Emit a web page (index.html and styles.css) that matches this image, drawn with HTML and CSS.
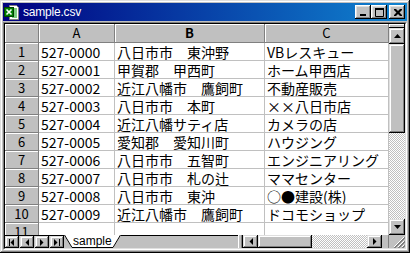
FILE: index.html
```html
<!DOCTYPE html>
<html>
<head>
    <title>sample.csv</title>
    <link rel="stylesheet" href="styles.css">
</head>
<body>
    <div class="window">
        <div class="titlebar">
            <svg class="app-icon" viewBox="0 0 16 16">
                <path d="M5.5 1.5h7l2 2v12h-9z" fill="#fff" stroke="#808080"/>
                <path d="M8 5h5M8 7h5M8 9h5M8 11h5M8 13h5" stroke="#00a000"/>
                <rect x="0.5" y="3.5" width="9" height="9" fill="#008000" stroke="#004000"/>
                <path d="M2.5 5.5l5 5M7.5 5.5l-5 5" stroke="#fff" stroke-width="1.6"/>
            </svg>
            <span class="title">sample.csv</span>
            <div class="title-buttons">
                <button class="tbtn"><svg width="8" height="7" viewBox="0 0 8 7"><rect x="0" y="5" width="6" height="2" fill="#000"/></svg></button>
                <button class="tbtn"><svg width="9" height="9" viewBox="0 0 9 9"><path d="M0.5 1.5h8v7h-8z" fill="none" stroke="#000"/><rect x="0" y="0" width="9" height="2" fill="#000"/></svg></button>
                <button class="tbtn close"><svg width="8" height="7" viewBox="0 0 8 7"><path d="M0 0h2l2 2 2-2h2v1l-2.5 2.5 2.5 2.5v1h-2l-2-2-2 2h-2v-1l2.5-2.5-2.5-2.5z" fill="#000"/></svg></button>
            </div>
        </div>

        <div class="sheet">
            <div class="sheet-inner">
                <div class="main">
                    <div class="grid" id="grid">
                        <div class="corner"></div>
                        <div class="colhead">A</div>
                        <div class="colhead active">B</div>
                        <div class="colhead">C</div>
                    </div>
                    <div class="vscroll">
                        <div class="split-v"></div>
                        <div class="sbtn"><svg width="7" height="4" viewBox="0 0 7 4"><path d="M3.5 0L7 4H0z" fill="#000"/></svg></div>
                        <div class="vthumb"></div>
                        <div class="track"></div>
                        <div class="sbtn"><svg width="7" height="4" viewBox="0 0 7 4"><path d="M0 0h7L3.5 4z" fill="#000"/></svg></div>
                    </div>
                </div>
                <div class="bottombar">
                    <div class="tabnav">
                        <div class="nbtn"><svg width="6" height="7" viewBox="0 0 6 7"><rect x="0" y="0" width="1" height="7"/><path d="M5 0v7L1.5 3.5z"/></svg></div>
                        <div class="nbtn"><svg width="4" height="7" viewBox="0 0 4 7"><path d="M4 0v7L0.5 3.5z"/></svg></div>
                        <div class="nbtn"><svg width="4" height="7" viewBox="0 0 4 7"><path d="M0 0v7l3.5-3.5z"/></svg></div>
                        <div class="nbtn"><svg width="6" height="7" viewBox="0 0 6 7"><path d="M0 0v7l3.5-3.5z"/><rect x="5" y="0" width="1" height="7"/></svg></div>
                    </div>
                    <div class="tab">
                        <svg class="slant" viewBox="0 0 8 13"><path d="M0 0L8 13V0z" fill="#fff"/><path d="M0.5 0L8 12.5" stroke="#000"/></svg>
                        <span class="tab-label">sample</span>
                        <svg class="slant" viewBox="0 0 8 13"><path d="M8 0L0 13V0z" fill="#fff"/><path d="M7.5 0L0 12.5" stroke="#000"/></svg>
                    </div>
                    <div class="tabfill"></div>
                    <div class="split-h"></div>
                    <div class="hbtn"><svg width="4" height="7" viewBox="0 0 4 7"><path d="M4 0v7L0.5 3.5z"/></svg></div>
                    <div class="hthumb"></div>
                    <div class="track htrack"></div>
                    <div class="hbtn"><svg width="4" height="7" viewBox="0 0 4 7"><path d="M0 0v7l3.5-3.5z"/></svg></div>
                    <div class="hgap"></div>
                    <div class="grip">
                        <svg width="12" height="12" viewBox="0 0 12 12">
                            <path d="M11 1L1 11M11 5L5 11M11 9L9 11" stroke="#fff"/>
                            <path d="M12 1L1 12M12 2L2 12M12 5L5 12M12 6L6 12M12 9L9 12M12 10L10 12" stroke="#808080"/>
                        </svg>
                    </div>
                </div>
            </div>
        </div>
    </div>

    <script>
        const rows = [
            ['527-0000', '八日市市　東沖野', 'VBレスキュー'],
            ['527-0001', '甲賀郡　甲西町', 'ホーム甲西店'],
            ['527-0002', '近江八幡市　鷹飼町', '不動産販売'],
            ['527-0003', '八日市市　本町', '××八日市店'],
            ['527-0004', '近江八幡サティ店', 'カメラの店'],
            ['527-0005', '愛知郡　愛知川町', 'ハウジング'],
            ['527-0006', '八日市市　五智町', 'エンジニアリング'],
            ['527-0007', '八日市市　札の辻', 'ママセンター'],
            ['527-0008', '八日市市　東沖', '○●建設(株)'],
            ['527-0009', '近江八幡市　鷹飼町', 'ドコモショップ'],
            ['', '', '']
        ];

        const grid = document.getElementById('grid');

        // Row header + three cells per line
        rows.forEach((row, i) => {
            const head = document.createElement('div');
            head.className = 'rowhead';
            head.textContent = i + 1;
            grid.appendChild(head);

            row.forEach(value => {
                const cell = document.createElement('div');
                cell.className = 'cell';
                cell.textContent = value;
                grid.appendChild(cell);
            });
        });
    </script>
</body>
</html>
```

FILE: styles.css
```css
* {
    box-sizing: border-box;
}

body {
    margin: 0;
    padding: 0;
    font-family: "Noto Sans CJK JP", sans-serif;
}

.window {
    width: 410px;
    height: 253px;
    padding: 3px;
    background: #c0c0c0;
    display: flex;
    flex-direction: column;
    box-shadow: inset -1px -1px #000, inset 1px 1px #dfdfdf,
                inset -2px -2px #808080, inset 2px 2px #fff;
}

/* title bar */
.titlebar {
    height: 18px;
    display: flex;
    align-items: center;
    padding: 0 2px 0 1px;
    background: linear-gradient(to right, #000080, #1084d0);
}

.app-icon {
    width: 16px;
    height: 16px;
}

.title {
    flex: 1;
    margin-left: 3px;
    color: #fff;
    font: 12px "Liberation Sans", sans-serif;
    letter-spacing: -0.2px;
}

.title-buttons {
    display: flex;
}

.tbtn {
    width: 16px;
    height: 14px;
    padding: 0 0 0 1px;
    border: none;
    background: #c0c0c0;
    display: flex;
    align-items: center;
    justify-content: center;
    box-shadow: inset -1px -1px #000, inset 1px 1px #fff,
                inset -2px -2px #808080, inset 2px 2px #dfdfdf;
}

.tbtn.close {
    margin-left: 2px;
}

/* sheet frame */
.sheet {
    margin-top: 1px;
    flex: 1;
    border: 1px solid;
    border-color: #808080 #fff #fff #808080;
    display: flex;
}

.sheet-inner {
    flex: 1;
    border: 1px solid;
    border-color: #000 #dfdfdf #dfdfdf #000;
    display: flex;
    flex-direction: column;
}

.main {
    display: flex;
    height: 211px;
}

.grid {
    display: grid;
    grid-template-columns: 34px 76px 150px 124px;
    grid-template-rows: 19px repeat(11, 18px);
    height: 211px;
    overflow: hidden;
    background: #fff;
}

.corner,
.colhead,
.rowhead {
    background: #c0c0c0;
    border-right: 1px solid #808080;
    border-bottom: 1px solid #808080;
    box-shadow: inset 1px 1px #fff;
    text-align: center;
    font-size: 13px;
    color: #000;
}

.colhead {
    line-height: 18px;
}

.colhead.active {
    font-weight: bold;
}

.rowhead {
    padding-top: 1px;
    line-height: 16px;
    overflow: hidden;
}

.cell {
    border-right: 1px solid #c0c0c0;
    border-bottom: 1px solid #c0c0c0;
    padding: 1px 0 0 2px;
    font-size: 14px;
    line-height: 16px;
    white-space: nowrap;
    overflow: hidden;
    color: #000;
}

/* scroll bars */
.vscroll {
    width: 16px;
    display: flex;
    flex-direction: column;
}

.split-v {
    height: 4px;
    background: #c0c0c0;
    box-shadow: inset -1px -1px #000, inset 1px 1px #fff;
}

.sbtn,
.hbtn,
.nbtn {
    background: #c0c0c0;
    display: flex;
    align-items: center;
    justify-content: center;
    box-shadow: inset -1px -1px #000, inset 1px 1px #dfdfdf,
                inset -2px -2px #808080, inset 2px 2px #fff;
}

.sbtn {
    height: 16px;
}

.vthumb {
    height: 89px;
    background: #c0c0c0;
    box-shadow: inset -1px -1px #000, inset 1px 1px #dfdfdf,
                inset -2px -2px #808080, inset 2px 2px #fff;
}

.track {
    flex: 1;
    background: repeating-conic-gradient(#fff 0 25%, #c0c0c0 0 50%) 0 0 / 2px 2px;
}

/* tabs + horizontal scroll */
.bottombar {
    flex: 1;
    display: flex;
    background: #c0c0c0;
}

.tabnav {
    display: flex;
    gap: 1px;
    border-top: 1px solid #000;
}

.nbtn {
    width: 14px;
}

.nbtn svg {
    fill: #000;
}

.tab {
    display: flex;
    height: 13px;
}

.slant {
    width: 8px;
    height: 13px;
}

.tab-label {
    background: #fff;
    border-bottom: 1px solid #000;
    font: 12px "Liberation Sans", sans-serif;
    line-height: 12px;
    padding: 0 1px;
}

.tabfill {
    flex: 1;
    border-top: 1px solid #000;
}

.split-h {
    width: 5px;
    box-shadow: inset -1px 0 #000, inset 1px 0 #fff, inset -2px 0 #808080;
    background: #c0c0c0;
}

.hbtn {
    width: 15px;
}

.hbtn svg {
    fill: #000;
}

.hthumb {
    width: 54px;
    background: #c0c0c0;
    box-shadow: inset -1px -1px #000, inset 1px 1px #dfdfdf,
                inset -2px -2px #808080, inset 2px 2px #fff;
}

.htrack {
    flex: none;
    width: 55px;
}

.hgap {
    width: 7px;
    border-right: 1px solid #808080;
}

.grip {
    width: 16px;
    display: flex;
    align-items: flex-end;
    justify-content: flex-end;
}
```
